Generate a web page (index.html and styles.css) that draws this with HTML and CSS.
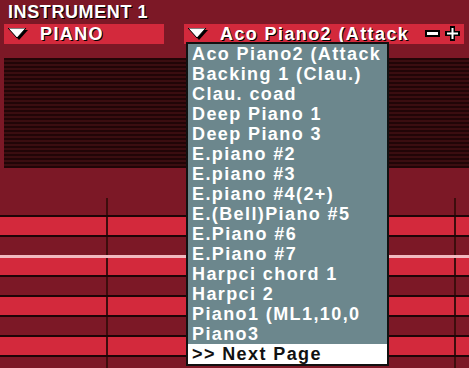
FILE: index.html
```html
<!DOCTYPE html>
<html>
<head>
<meta charset="utf-8">
<link rel="stylesheet" href="styles.css">
</head>
<body>
<div class="title">INSTRUMENT 1</div>
<div class="bars">
  <div class="bar bar-left">
    <svg class="tri" width="20" height="12" viewBox="0 0 20 12"><polygon points="1,1 19,1 10,11" fill="#000" transform="translate(1,1)"/><polygon points="0,0 18,0 9,10" fill="#fff" stroke="#000" stroke-width="1"/></svg>
    <span class="bar-text">PIANO</span>
  </div>
  <div class="bar bar-right">
    <svg class="tri" width="20" height="12" viewBox="0 0 20 12"><polygon points="1,1 19,1 10,11" fill="#000" transform="translate(1,1)"/><polygon points="0,0 18,0 9,10" fill="#fff" stroke="#000" stroke-width="1"/></svg>
    <span class="bar-text grow">Aco Piano2 (Attack</span>
    <svg class="btn" width="16" height="16" viewBox="0 0 16 16"><rect x="0" y="4" width="15" height="7" fill="#000"/><rect x="2" y="6" width="11" height="3" fill="#fff"/></svg>
    <svg class="btn" width="16" height="16" viewBox="0 0 16 16"><polygon points="5,0 10,0 10,5 15,5 15,10 10,10 10,15 5,15 5,10 0,10 0,5 5,5" fill="#000"/><polygon points="6.5,2 8.5,2 8.5,6.5 13,6.5 13,8.5 8.5,8.5 8.5,13 6.5,13 6.5,8.5 2,8.5 2,6.5 6.5,6.5" fill="#fff"/></svg>
  </div>
</div>
<div class="scan"></div>
<div class="grid">
  <div class="lane lane-top"><div class="cell c1 dark"></div><div class="cell c2 dark"></div><div class="cell c3 dark"></div></div>
  <div class="lane"><div class="cell c1 red"></div><div class="cell c2 red"></div><div class="cell c3 red"></div></div>
  <div class="lane"><div class="cell c1 dark"></div><div class="cell c2 dark"></div><div class="cell c3 dark"></div></div>
  <div class="lane lane-pink"><div class="cell c1 red"></div><div class="cell c2 red"></div><div class="cell c3 red"></div></div>
  <div class="lane"><div class="cell c1 dark"></div><div class="cell c2 dark"></div><div class="cell c3 dark"></div></div>
  <div class="lane"><div class="cell c1 red"></div><div class="cell c2 red"></div><div class="cell c3 red"></div></div>
  <div class="lane"><div class="cell c1 dark"></div><div class="cell c2 dark"></div><div class="cell c3 dark"></div></div>
  <div class="lane"><div class="cell c1 red"></div><div class="cell c2 red"></div><div class="cell c3 red"></div></div>
  <div class="lane lane-last"><div class="cell c1 dark"></div><div class="cell c2 dark"></div><div class="cell c3 dark"></div></div>
</div>
<ul class="menu">
  <li>Aco Piano2 (Attack</li>
  <li>Backing 1 (Clau.)</li>
  <li>Clau. coad</li>
  <li>Deep Piano 1</li>
  <li>Deep Piano 3</li>
  <li>E.piano #2</li>
  <li>E.piano #3</li>
  <li>E.piano #4(2+)</li>
  <li>E.(Bell)Piano #5</li>
  <li>E.Piano #6</li>
  <li>E.Piano #7</li>
  <li>Harpci chord 1</li>
  <li>Harpci 2</li>
  <li>Piano1 (ML1,10,0</li>
  <li>Piano3</li>
  <li class="next">&gt;&gt; Next Page</li>
</ul>
</body>
</html>
```
FILE: styles.css
```css
html, body {
  margin: 0;
  padding: 0;
}
body {
  position: relative;
  width: 469px;
  height: 368px;
  overflow: hidden;
  background: #7c1826;
  font-family: "Liberation Sans", Arial, sans-serif;
  font-weight: bold;
  font-size: 18px;
  color: #fff;
}
.title {
  height: 24px;
  line-height: 24px;
  padding-left: 8px;
  letter-spacing: 0.6px;
  text-shadow: 1px 1px 0 #000;
}
.bars {
  display: flex;
  gap: 20px;
  padding: 0 5px 0 4px;
  height: 20px;
}
.bar {
  background: #d3293c;
  display: flex;
  align-items: center;
  padding-left: 4px;
  height: 20px;
  line-height: 20px;
}
.bar-left {
  width: 156px;
}
.bar-right {
  flex: 1;
  padding-right: 3px;
}
.tri {
  flex: none;
  margin-right: 12px;
}
.bar-text {
  letter-spacing: 1.4px;
  text-shadow: 1px 1px 0 #000;
  white-space: nowrap;
}
.grow {
  flex: 1;
}
.btn {
  flex: none;
  margin-left: 4px;
}
.scan {
  margin: 14px 0 0 4px;
  height: 110px;
  background: repeating-linear-gradient(to bottom, #210507 0, #210507 2px, #3b0d10 2px, #3b0d10 4px);
}
.grid {
  margin-top: 30px;
}
.lane {
  display: flex;
  gap: 2px;
  background: #3e0d0d;
  border-top: 2px solid #1e0507;
  height: 18px;
}
.lane-top {
  border-top: none;
  height: 17px;
}
.lane-pink {
  border-top: 3px solid #f2b9bf;
  height: 17px;
}
.lane-last {
  height: 20px;
}
.cell.c1 { width: 106px; }
.cell.c2 { width: 346px; }
.cell.c3 { flex: 1; }
.red { background: #d3293c; }
.dark { background: #7c1826; }
.menu {
  position: absolute;
  left: 186px;
  top: 42px;
  width: 199px;
  margin: 0;
  padding: 0;
  list-style: none;
  background: #6c878d;
  border: 2px solid #111;
}
.menu li {
  height: 20px;
  line-height: 20px;
  padding-left: 4px;
  letter-spacing: 1.4px;
  white-space: nowrap;
  overflow: hidden;
}
.menu li.next {
  background: #fff;
  color: #111;
}
```
